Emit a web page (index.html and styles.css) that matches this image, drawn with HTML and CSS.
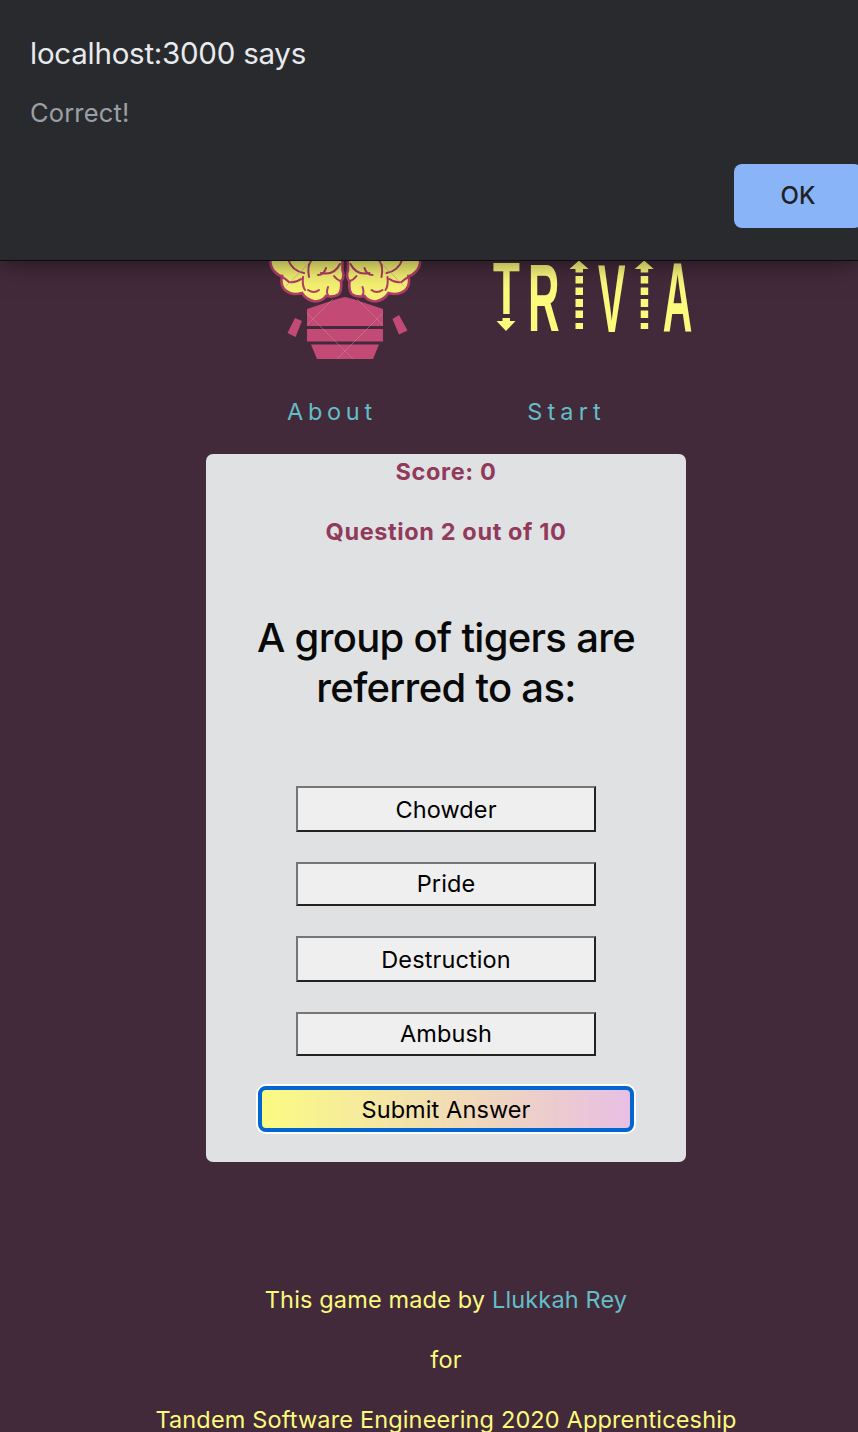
FILE: index.html
```html
<!DOCTYPE html>
<html lang="en">
<head>
<meta charset="utf-8">
<title>Trivia</title>
<link rel="stylesheet" href="styles.css">
</head>
<body>
<div class="dialog" role="dialog">
  <h1 class="dialog-title"><span>localhost:3000 says</span></h1>
  <p class="dialog-message"><span>Correct!</span></p>
  <button class="dialog-ok"><span>OK</span></button>
</div>
<div class="page">
  <header class="header">
    <svg class="brain" width="160" height="134" viewBox="265 231 160 134">
      <defs>
        <g id="lobe">
          <path d="M270.500 255Q269 267 275 272Q279 276 282 276Q280 285 285 290Q292 296 302 293Q306 300 315 301.500Q323 301 326 296Q334 298 339 294Q342 290 341 282Q345 277 342.500 270L342.500 255Z" fill="#f5f172" stroke="#b03d68" stroke-width="2.600"/>
          <path d="M282 277Q286 279 289 282Q296 283 301 279M288 259Q292 271 304 273M303 277Q302 286 305 290M308 290Q314 294 319 290M309 277Q307 266 311 261M318 275Q324 275 326 268M321 273Q334 276 340 264M328 287Q326 293 328 295M341 281Q337 280 334 276" fill="none" stroke="#b03d68" stroke-width="2" stroke-linecap="round"/>
        </g>
      </defs>
      <use href="#lobe"/>
      <use href="#lobe" transform="translate(690.5 0) scale(-1 1)"/>
      <g fill="#c44a76">
        <path d="M307 309L337 299L345 297L353 299L383 309V326H307ZM307 329H383V341.500H307ZM311 344.500H379L373 359H317ZM295 318L302 321L295.500 337L287.500 333ZM392.500 319L399 315L407.500 330.500L399 334.500Z"/>
      </g>
      <path d="M307 325L333 299M383 325L357 299M307 313L353 359M383 313L337 359M286 286L311 261M404 286L379 261" stroke="#c9869a" stroke-opacity=".5" fill="none"/>
    </svg>
    <svg class="wordmark" width="210" height="134" viewBox="490 231 210 134" role="img" aria-label="Trivia">
      <g class="letters">
        <text transform="translate(493 314) scale(.59 1)" font-size="74.500">T</text>
        <text transform="translate(528.100 331) scale(.455 1)" font-size="96">R</text>
        <text transform="translate(598 331.500) scale(.425 1)" font-size="97">V</text>
        <text transform="translate(662.700 331) scale(.414 1)" font-size="99">A</text>
      </g>
      <path class="arrow" d="M502.500 318H510V321H515.500L506 331L496.500 321H502.500Z"/>
      <g id="up" class="arrow"><path d="M569.500 269L579 260.500L588.500 269H583V272.500H575.500V269ZM575.500 276H583V283.500H575.500ZM575.500 287.500H583V295H575.500ZM575.500 299H583V307H575.500ZM575.500 310.500H583V318H575.500ZM575.500 323H583V329H575.500Z"/></g>
      <use href="#up" x="65.200"/>
    </svg>
  </header>
  <nav class="nav"><a><span>About</span></a><a class="start"><span>Start</span></a></nav>
  <main class="card">
    <p class="stat"><span class="score">Score: 0</span></p>
    <p class="stat"><span class="count">Question 2 out of 10</span></p>
    <h2 class="question"><span>A group of tigers are</span><br><span>referred to as:</span></h2>
    <div class="answers">
      <button class="answer tall"><span>Chowder</span></button>
      <button class="answer"><span>Pride</span></button>
      <button class="answer tall"><span>Destruction</span></button>
      <button class="answer"><span>Ambush</span></button>
      <button class="submit"><span>Submit Answer</span></button>
    </div>
  </main>
  <footer class="footer">
    <p><span>This game made by <a>Llukkah Rey</a></span></p>
    <p><span>for</span></p>
    <p><span>Tandem Software Engineering 2020 Apprenticeship</span></p>
  </footer>
</div>
</body>
</html>
```
FILE: styles.css
```css
* { box-sizing: border-box; }
body { margin: 0; height: 1432px; overflow: hidden; background: #432a3a; font-family: Inter, sans-serif; font-size: 23.500px; line-height: 30px; display: flex; flex-direction: column; }
p, h1, h2 { margin: 0; }
button { font: inherit; color: #000; padding: 0; letter-spacing: .1px; }
.dialog { height: 261px; flex: none; background: #292a2d; border-bottom: 1px solid #0c0b0d; padding: 35px 0 0 30px; display: flex; flex-direction: column; box-shadow: 0 2px 24px rgba(0,0,0,.5); position: relative; z-index: 1; }
.dialog-title { font-size: 29.500px; font-weight: 400; line-height: 36px; color: #e8eaed; letter-spacing: -.25px; }
.dialog-message { font-size: 25.500px; line-height: 32px; margin-top: 26px; color: #9aa0a6; letter-spacing: .15px; }
.dialog-ok { margin: 35px 0 0 704px; width: 128px; height: 64px; flex: none; border: 0; border-radius: 8px; background: #8ab4f8; color: #202124; font-size: 24px; font-weight: 500; letter-spacing: 0; }
.page { width: 892px; flex: none; display: flex; flex-direction: column; align-items: center; }
.header { width: 892px; height: 134px; margin-top: -30px; padding-left: 265px; display: flex; gap: 65px; }
.header svg { flex: none; }
.letters { font-family: "Liberation Sans", sans-serif; font-weight: 700; fill: #fcfa7c; }
.arrow { fill: #fcfa7c; }
.nav { height: 89px; width: 892px; padding: 32px 0 0 287px; display: flex; gap: 150.500px; color: #62bec7; letter-spacing: 4.700px; }
.start { letter-spacing: 5.100px; }
.card { width: 480px; height: 708px; background: #e0e1e3; border-radius: 7px; padding-top: 3px; text-align: center; }
.stat { color: #913b5c; font-weight: 700; margin-bottom: 30px; letter-spacing: .62px; }
.question { margin-top: 36px; font-size: 40px; line-height: 50px; font-weight: 500; padding-top: 30px; color: #080908; letter-spacing: -.7px; }
.answers { display: flex; flex-direction: column; align-items: center; gap: 30px; margin-top: 73px; }
.answer { width: 300px; height: 44px; background: #efefef; border: 2px solid; border-color: #767676 #222 #222 #767676; }
.answer.tall { height: 46px; padding-top: 2px; }
.submit { width: 376px; height: 46px; padding-top: 2px; border: 4px solid #0067d2; border-radius: 8px; box-shadow: 0 0 0 2px #fff; background: linear-gradient(90deg, #fbfa83, #e8bfe3); }
.footer { padding-top: 123px; color: #fcfa7c; text-align: center; display: flex; flex-direction: column; gap: 30px; white-space: nowrap; letter-spacing: .15px; }
.footer a { color: #62bec7; }
```
